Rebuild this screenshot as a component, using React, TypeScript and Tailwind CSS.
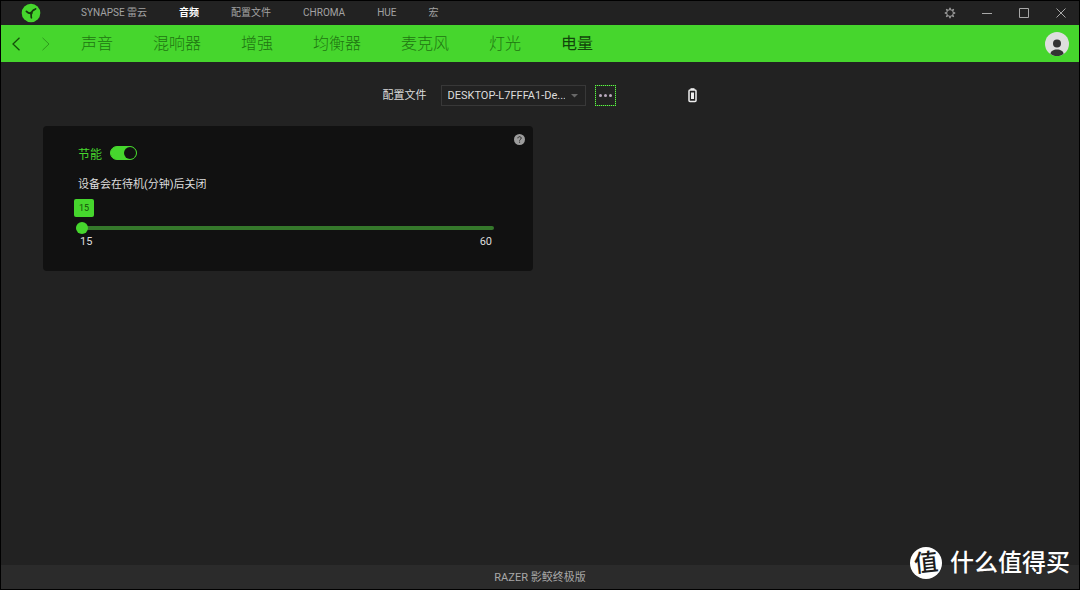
import { useState } from "react";

const menuItems = ["SYNAPSE 雷云", "音频", "配置文件", "CHROMA", "HUE", "宏"];
const tabs = ["声音", "混响器", "增强", "均衡器", "麦克风", "灯光", "电量"];

const Logo = () => (
  <svg width="20" height="20" viewBox="0 0 20 20" fill="none">
    <circle cx="10" cy="10" r="9.3" fill="#46d62d" />
    <g stroke="#16380f" strokeWidth="1.7" strokeLinecap="round" strokeLinejoin="round">
      <path d="M5.4 8.4c1.2 1.4 2.6 2 4.4 2M14.6 5.8c-1.2 1.2-2.8 1.2-3.4 2.6-.4 1-.6 1.4-1.2 2M9.8 10.4c.8 1.2 0 2.6.6 4.4" />
    </g>
    <circle cx="10.2" cy="10" r="1.5" fill="#16380f" />
  </svg>
);

const TitleBar = () => (
  <header className="flex h-[24px] items-center justify-between bg-[#222222] pr-[12px] pl-[20px]">
    <div className="flex items-center gap-[40px]">
      <Logo />
      <nav className="flex items-center gap-[32px] text-[10px] leading-[14px]">
        {menuItems.map((item) => (
          <a
            key={item}
            href="#"
            className={item === "音频" ? "font-bold text-white" : "text-[#a2a2a2]"}
          >
            {item}
          </a>
        ))}
      </nav>
    </div>
    <div className="flex items-center gap-[25px] text-[#a8a8a8]">
      <button aria-label="Settings">
        <svg width="12" height="12" viewBox="0 0 12 12" fill="none" stroke="currentColor">
          <circle cx="6" cy="6" r="3.4" />
          <path
            strokeWidth="1.5"
            d="M6 .8v1.6M6 9.6v1.6M.8 6h1.6M9.6 6h1.6M2.3 2.3l1.1 1.1M8.6 8.6l1.1 1.1M2.3 9.7l1.1-1.1M8.6 3.4l1.1-1.1"
          />
        </svg>
      </button>
      <button aria-label="Minimize">
        <svg width="12" height="12" viewBox="0 0 12 12" stroke="currentColor">
          <path d="M1 6.5h10" />
        </svg>
      </button>
      <button aria-label="Maximize">
        <svg width="12" height="12" viewBox="0 0 12 12" fill="none" stroke="currentColor">
          <path d="M1.5 1.5h9v9h-9z" />
        </svg>
      </button>
      <button aria-label="Close">
        <svg width="12" height="12" viewBox="0 0 12 12" stroke="currentColor">
          <path d="M1.5 1.5l9 9M10.5 1.5l-9 9" />
        </svg>
      </button>
    </div>
  </header>
);

const TabBar = () => (
  <div className="flex h-[37px] items-center justify-between bg-[#46d62d] px-[10px]">
    <div className="flex items-center">
      <button aria-label="Back" className="text-[#14500a]">
        <svg width="10" height="14" viewBox="0 0 10 14" fill="none" stroke="currentColor" strokeWidth="1.3">
          <path d="M8.5 .8L2 7l6.5 6.2" />
        </svg>
      </button>
      <button aria-label="Forward" className="ml-[20px] text-[#2f9a1d]">
        <svg width="10" height="14" viewBox="0 0 10 14" fill="none" stroke="currentColor">
          <path d="M1.5 .8L8 7l-6.5 6.2" />
        </svg>
      </button>
      <nav className="ml-[30px] flex gap-[40px] text-[16px] leading-[24px]">
        {tabs.map((tab) => (
          <a
            key={tab}
            href="#"
            className={tab === "电量" ? "text-[#12460a]" : "font-light text-[#1f7511]"}
          >
            {tab}
          </a>
        ))}
      </nav>
    </div>
    <button aria-label="Account">
      <svg width="24" height="24" viewBox="0 0 24 24">
        <circle cx="12" cy="12" r="12" fill="#dedede" />
        <circle cx="12" cy="11.5" r="4" fill="#333333" />
        <path d="M5.5 22.1c0-3 3-4.6 6.5-4.6s6.5 1.6 6.5 4.6a12 12 0 0 1-13 0z" fill="#333333" />
      </svg>
    </button>
  </div>
);

const ProfileBar = () => (
  <div className="flex items-center justify-center text-[11px] text-[#dddddd]">
    <label htmlFor="profile" className="pt-[2px]">
      配置文件
    </label>
    <div className="relative ml-[14px]">
      <select
        id="profile"
        className="block h-[21px] w-[145px] appearance-none border border-[#383838] bg-[#222222] pt-[2px] pr-[20px] pl-[6px] text-[11px]"
      >
        <option>DESKTOP-L7FFFA1-De...</option>
      </select>
      <svg
        className="pointer-events-none absolute top-[9px] right-[8px]"
        width="7"
        height="4"
        viewBox="0 0 7 4"
        fill="#686868"
      >
        <path d="M0 0h7L3.5 3.5z" />
      </svg>
    </div>
    <button
      aria-label="More"
      className="ml-[9px] h-[21px] w-[21px] border border-dotted border-[#6fe05a] bg-[#1c7a10]"
    >
      <span className="flex h-full w-full items-center justify-center bg-[#222222]">
        <svg width="13" height="3" viewBox="0 0 13 3" fill="#b9a9bd">
          <circle cx="1.5" cy="1.5" r="1.5" />
          <circle cx="6.5" cy="1.5" r="1.5" />
          <circle cx="11.5" cy="1.5" r="1.5" />
        </svg>
      </span>
    </button>
    <svg className="ml-[71px]" width="11" height="16" viewBox="0 0 11 16" fill="none">
      <path d="M3.5 .2h4V2h-4z" fill="#eeeeee" />
      <rect x="2" y="2" width="7" height="11.5" rx="1" stroke="#eeeeee" strokeWidth="1.5" />
      <path d="M4 4.5h3V11H4z" fill="#eeeeee" />
    </svg>
  </div>
);

const PowerSaving = () => {
  const [enabled, setEnabled] = useState(true);
  const [minutes, setMinutes] = useState(15);

  return (
    <section className="flex w-full max-w-[490px] items-start rounded-[4px] bg-[#111111] pt-[8px] pr-[8px] pb-[21px] pl-[35px] text-[11px] leading-[16px] text-[#dddddd]">
      <div className="flex-1 pt-[10px]">
        <div className="flex items-start gap-[8px]">
          <label htmlFor="saving" className="pt-[2px] text-[12px] leading-[18px] text-[#46d62d]">
            节能
          </label>
          <input
            id="saving"
            type="checkbox"
            checked={enabled}
            onChange={(e) => setEnabled(e.target.checked)}
            className="mt-[2px] flex h-[14px] w-[27px] cursor-pointer appearance-none items-center rounded-full border border-[#46d62d] before:h-[12px] before:w-[12px] before:rounded-full before:bg-[#46d62d] checked:justify-end checked:bg-[#46d62d] checked:before:bg-[#111111]"
          />
        </div>
        <label htmlFor="minutes" className="mt-[13px] block">
          设备会在待机(分钟)后关闭
        </label>
        <div className="-ml-[4px] pt-[6px]">
          <output
            htmlFor="minutes"
            className="block h-[18px] w-[20px] rounded-[2px] bg-[#46d62d] text-center text-[9px] leading-[18px] text-[#14500a]"
          >
            {minutes}
          </output>
        </div>
        <input
          id="minutes"
          type="range"
          min={15}
          max={60}
          value={minutes}
          onChange={(e) => setMinutes(Number(e.target.value))}
          className="mt-[5px] -ml-[2px] block h-[12px] w-full cursor-pointer appearance-none bg-transparent [&::-webkit-slider-runnable-track]:h-[4px] [&::-webkit-slider-runnable-track]:rounded-full [&::-webkit-slider-runnable-track]:bg-[#35782b] [&::-webkit-slider-thumb]:-mt-[4px] [&::-webkit-slider-thumb]:h-[12px] [&::-webkit-slider-thumb]:w-[12px] [&::-webkit-slider-thumb]:appearance-none [&::-webkit-slider-thumb]:rounded-full [&::-webkit-slider-thumb]:bg-[#46d62d]"
        />
        <div className="flex justify-between pr-[4px] pl-[2px]">
          <span>15</span>
          <span>60</span>
        </div>
      </div>
      <button aria-label="Help" className="ml-[18px]">
        <svg width="11" height="11" viewBox="0 0 11 11" fill="none">
          <circle cx="5.5" cy="5.5" r="5.5" fill="#9c9c9c" />
          <path d="M3.9 4.3c0-2.2 3.3-2.1 3.3-.1 0 1.2-1.6 1.2-1.6 2.4M5.6 7.6v1.1" stroke="#222222" />
        </svg>
      </button>
    </section>
  );
};

const Watermark = () => (
  <div className="absolute right-[9px] bottom-[10px] flex items-center gap-[8px] text-white">
    <div className="flex h-[32px] w-[32px] items-center justify-center rounded-full bg-white text-[24px] leading-[32px] font-medium text-[#1c1c1c]">
      <span className="-rotate-6">值</span>
    </div>
    <span className="text-[24px] leading-[32px] font-medium">什么值得买</span>
  </div>
);

const App = () => {
  return (
    <div className="relative flex min-h-screen flex-col border border-black bg-[#222222] font-['Roboto','Noto_Sans_CJK_SC',sans-serif]">
      <TitleBar />
      <TabBar />
      <main className="flex-1 px-[42px] pt-[23px]">
        <ProfileBar />
        <div className="mt-[20px]">
          <PowerSaving />
        </div>
      </main>
      <footer className="bg-[#2b2b2b] pt-[5px] pb-[3px] text-center text-[11px] leading-[16px] text-[#a8a8a8]">
        RAZER 影鲛终极版
      </footer>
      <Watermark />
    </div>
  );
};

export default App;
